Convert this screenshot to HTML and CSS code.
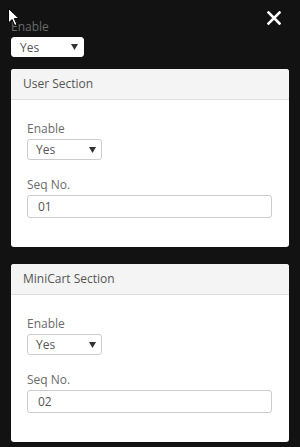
FILE: index.html
```html
<!DOCTYPE html>
<html>

<head>
    <title>Sections</title>
    <link rel="stylesheet" href="styles.css">
</head>

<body>
    <div class="topRow">
        <div class="field">
            <label class="label">Enable</label>
            <div class="select select-top">
                <span>Yes</span>
                <svg width="7" height="6" viewBox="0 0 7 6"><path d="M0 0H7L3.5 6Z" fill="#333"/></svg>
            </div>
        </div>
        <svg class="close" width="14" height="14" viewBox="0 0 14 14">
            <path d="M1.5 1.5L12.5 12.5M12.5 1.5L1.5 12.5" stroke="#fff" stroke-width="2.6" stroke-linecap="square"/>
        </svg>
    </div>

    <section class="card">
        <div class="cardHeader">User Section</div>
        <div class="cardBody">
            <label class="label">Enable</label>
            <div class="select">
                <span>Yes</span>
                <svg width="7" height="6" viewBox="0 0 7 6"><path d="M0 0H7L3.5 6Z" fill="#333"/></svg>
            </div>
            <label class="label label-gap">Seq No.</label>
            <div class="input">01</div>
        </div>
    </section>

    <section class="card">
        <div class="cardHeader">MiniCart Section</div>
        <div class="cardBody">
            <label class="label">Enable</label>
            <div class="select">
                <span>Yes</span>
                <svg width="7" height="6" viewBox="0 0 7 6"><path d="M0 0H7L3.5 6Z" fill="#333"/></svg>
            </div>
            <label class="label label-gap">Seq No.</label>
            <div class="input">02</div>
        </div>
    </section>

    <svg class="cursor" width="13" height="19" viewBox="0 0 13 19">
        <path d="M0.5 0.5V15L4 11.5L6.8 17.5L9 16.5L6.3 10.6H11Z" fill="#fff" stroke="#000" stroke-width="1" stroke-linejoin="round"/>
    </svg>
</body>

</html>
```

FILE: styles.css
```css
body {
    font-family: "Open Sans", Arial, sans-serif;
    font-size: 12px;
    background-color: #121212;
    margin: 0;
    padding: 18px 11px 0 11px;
}

.topRow {
    display: flex;
    justify-content: space-between;
    align-items: flex-start;
}

.close {
    margin: -7px 8px 0 0;
}

.label {
    display: block;
    color: #6b6b6b;
    line-height: 17px;
    margin-bottom: 2px;
}

.label-gap {
    margin-top: 16px;
}

.select {
    display: flex;
    justify-content: space-between;
    align-items: center;
    box-sizing: border-box;
    width: 75px;
    height: 21px;
    padding: 0 5px 0 8px;
    background-color: #fff;
    border: 1px solid #ccc;
    border-radius: 3px;
    color: #555;
}

.select-top {
    width: 73px;
    height: 20px;
    border-color: #fff;
}

.card {
    background-color: #fff;
    border-radius: 3px;
    margin-top: 12px;
    overflow: hidden;
}

.card + .card {
    margin-top: 17px;
}

.cardHeader {
    background-color: #f4f4f4;
    border-bottom: 1px solid #ddd;
    color: #555;
    height: 30px;
    line-height: 30px;
    padding-left: 12px;
}

.cardBody {
    padding: 20px 17px 29px 16px;
}

.input {
    box-sizing: border-box;
    height: 23px;
    line-height: 21px;
    padding-left: 10px;
    border: 1px solid #ccc;
    border-radius: 3px;
    color: #555;
}

.cursor {
    position: absolute;
    left: 8px;
    top: 8px;
}
```
